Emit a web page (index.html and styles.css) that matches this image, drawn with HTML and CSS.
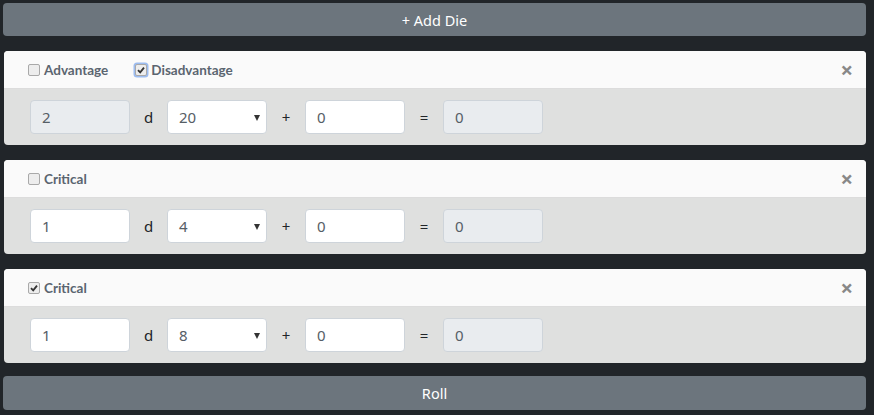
FILE: index.html
```html
<!DOCTYPE html>
<html>
<head>
<meta charset="utf-8">
<link rel="stylesheet" href="styles.css">
</head>
<body>
<div class="app">
  <button class="btn">+ Add Die</button>

  <div class="card">
    <div class="card-head">
      <label class="chk"><span class="box"></span>Advantage</label>
      <label class="chk"><span class="box checked focus"><svg viewBox="0 0 10 10"><path d="M2 5.2 L4.2 7.4 L8 2.6" /></svg></span>Disadvantage</label>
      <span class="close">×</span>
    </div>
    <div class="card-body">
      <div class="field disabled">2</div>
      <span class="op">d</span>
      <div class="field select">20<span class="arrow"></span></div>
      <span class="op wide">+</span>
      <div class="field">0</div>
      <span class="op wide">=</span>
      <div class="field disabled">0</div>
    </div>
  </div>

  <div class="card">
    <div class="card-head">
      <label class="chk"><span class="box"></span>Critical</label>
      <span class="close">×</span>
    </div>
    <div class="card-body">
      <div class="field">1</div>
      <span class="op">d</span>
      <div class="field select">4<span class="arrow"></span></div>
      <span class="op wide">+</span>
      <div class="field">0</div>
      <span class="op wide">=</span>
      <div class="field disabled">0</div>
    </div>
  </div>

  <div class="card">
    <div class="card-head">
      <label class="chk"><span class="box checked"><svg viewBox="0 0 10 10"><path d="M2 5.2 L4.2 7.4 L8 2.6" /></svg></span>Critical</label>
      <span class="close">×</span>
    </div>
    <div class="card-body">
      <div class="field">1</div>
      <span class="op">d</span>
      <div class="field select">8<span class="arrow"></span></div>
      <span class="op wide">+</span>
      <div class="field">0</div>
      <span class="op wide">=</span>
      <div class="field disabled">0</div>
    </div>
  </div>

  <button class="btn roll">Roll</button>
</div>
</body>
</html>
```
FILE: styles.css
```css
html, body {
  margin: 0;
  padding: 0;
  background: #212529;
}
.app {
  padding: 3px 8px 0 3px;
  display: flex;
  flex-direction: column;
  font-family: "Noto Sans", "Open Sans", sans-serif;
}
.btn {
  height: 33px;
  border: 0;
  border-radius: 4px;
  background: #6c757d;
  color: #fff;
  font-family: "Noto Sans", sans-serif;
  font-size: 14.5px;
  padding: 0;
}
.roll {
  margin-top: 13px;
  height: 34px;
}
.card {
  margin: 15px 0 0 1px;
  border-radius: 4px;
  overflow: hidden;
  background: #dfe0df;
}
.card-head {
  height: 37px;
  background: #fafafa;
  border-bottom: 1px solid #dcdcdc;
  display: flex;
  align-items: center;
  padding: 0 13px 0 24px;
  gap: 27px;
}
.chk {
  display: flex;
  align-items: center;
  gap: 4px;
  font-family: Lato, "Noto Sans", sans-serif;
  font-weight: 700;
  font-size: 13.5px;
  color: #5b6570;
}
.box {
  width: 10px;
  height: 10px;
  border: 1px solid #a9a9a9;
  border-radius: 2px;
  background: #ededed;
  display: flex;
  align-items: center;
  justify-content: center;
}
.box svg {
  width: 10px;
  height: 10px;
}
.box path {
  fill: none;
  stroke: #333;
  stroke-width: 1.8;
}
.box.focus {
  box-shadow: 0 0 0 1.5px #9cbcf0;
}
.close {
  margin-left: auto;
  font-size: 22px;
  font-weight: 700;
  color: #888;
  line-height: 1;
  margin-top: -1px;
}
.card-body {
  height: 56px;
  display: flex;
  align-items: center;
  padding: 0 0 0 26px;
}
.field {
  box-sizing: border-box;
  width: 100px;
  height: 34px;
  background: #fff;
  border: 1px solid #ced4da;
  border-radius: 4px;
  font-size: 15px;
  color: #565e66;
  display: flex;
  align-items: center;
  padding-left: 11px;
  position: relative;
  flex: none;
}
.field.disabled {
  background: #e9ecef;
}
.arrow {
  position: absolute;
  right: 6px;
  top: 14px;
  width: 0;
  height: 0;
  border-left: 3.5px solid transparent;
  border-right: 3.5px solid transparent;
  border-top: 6px solid #333;
}
.op {
  width: 37px;
  flex: none;
  text-align: center;
  font-size: 15px;
  color: #212529;
}
.op.wide {
  width: 38px;
}
```
